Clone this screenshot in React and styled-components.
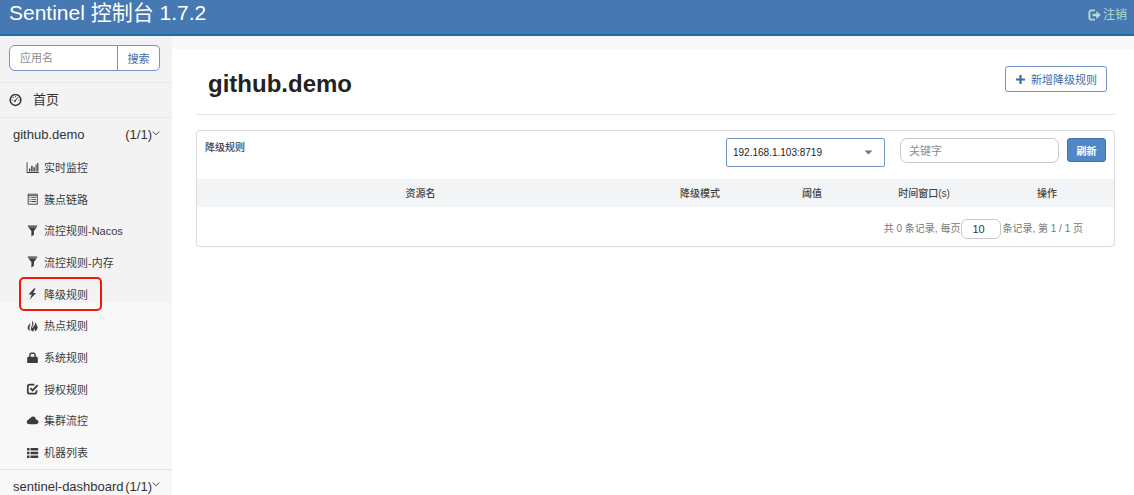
import React from "react";
import styled, { createGlobalStyle } from "styled-components";

const GlobalStyle = createGlobalStyle`
  *, *::before, *::after { box-sizing: border-box; }
  body {
    margin: 0;
    background: #fff;
    color: #333;
    font-family: "Liberation Sans", "Noto Sans CJK SC", sans-serif;
    font-size: 11px;
    line-height: 16px;
  }
  #root { overflow: hidden; }
  button, input, select { font-family: inherit; margin: 0; }
  svg { display: block; flex: none; }
`;

const Navbar = styled.header`
  display: flex;
  justify-content: space-between;
  align-items: flex-start;
  height: 36px;
  padding: 0 7px 0 9px;
  background: #4678b2;
  border-bottom: 2px solid #1a6cb4;
`;

const Brand = styled.a`
  color: #fff;
  font-size: 21px;
  line-height: 26px;
  text-decoration: none;
`;

const Logout = styled.a`
  display: flex;
  align-items: center;
  gap: 2px;
  color: #b4dccb;
  font-size: 12px;
  line-height: 30px;
  text-decoration: none;
`;

const Body = styled.div`
  display: flex;
  align-items: flex-start;
`;

const Sidebar = styled.nav`
  flex: none;
  width: 172px;
  background: linear-gradient(#f3f3f3 267px, #f8f8f8 267px);
`;

const Search = styled.form`
  display: flex;
  padding: 9px 12px 11px 9px;
  border-bottom: 1px solid #e7e7e7;
`;

const SearchInput = styled.input`
  flex: 1;
  min-width: 0;
  height: 26px;
  padding: 0 10px;
  border: 1px solid #7295c9;
  border-radius: 6px 0 0 6px;
  background: #fff;
  font-size: 11px;
  color: #333;
  &::placeholder { color: #8c8c8c; }
`;

const SearchButton = styled.button`
  width: 42px;
  height: 26px;
  padding: 0;
  border: 1px solid #7295c9;
  border-left: 0;
  border-radius: 0 5px 5px 0;
  background: #fff;
  color: #4169a8;
  font-size: 11px;
`;

const HomeLink = styled.a`
  display: flex;
  align-items: center;
  gap: 11px;
  height: 35px;
  padding-left: 9px;
  border-bottom: 1px solid #e7e7e7;
  color: #333;
  font-size: 13px;
  text-decoration: none;
`;

const AppLink = styled.a`
  display: flex;
  align-items: center;
  height: 34px;
  padding: 0 12px 0 13px;
  color: #333;
  font-size: 13px;
  text-decoration: none;
  border-top: ${(p) => (p.$divided ? "1px solid #e2e2e2" : "0")};
`;

const AppName = styled.span`
  flex: 1;
`;

const Menu = styled.ul`
  display: grid;
  grid-auto-rows: 1fr;
  height: 317px;
  margin: 0;
  padding: 0;
  list-style: none;
`;

const MenuItem = styled.li`
  position: relative;
  display: flex;
  padding-left: 26px;
`;

const MenuLink = styled.a`
  display: flex;
  align-items: center;
  gap: 5px;
  color: #3c3c3c;
  font-size: 11px;
  text-decoration: none;
`;

const Highlight = styled.span`
  position: absolute;
  top: -2px;
  left: 19px;
  width: 83px;
  height: 34px;
  border: 2px solid #f5150d;
  border-radius: 5px;
  pointer-events: none;
`;

const Main = styled.main`
  flex: 1;
  min-width: 0;
  border-top: 13px solid #f8f8f8;
  padding: 0 19px 0 24px;
`;

const PageHead = styled.div`
  display: flex;
  align-items: flex-start;
  justify-content: space-between;
  height: 66px;
  padding: 17px 8px 0 12px;
  border-bottom: 1px solid #e6e6e6;
`;

const Title = styled.h1`
  margin: 0;
  color: #222;
  font-size: 24px;
  line-height: 36px;
`;

const AddButton = styled.button`
  display: flex;
  align-items: center;
  gap: 5px;
  height: 26px;
  padding: 0 9px;
  border: 1px solid #7295c9;
  border-radius: 3px;
  background: #fff;
  color: #3f68a8;
  font-size: 11px;
`;

const Panel = styled.section`
  margin-top: 15px;
  border: 1px solid #dcdddf;
  border-radius: 4px;
  box-shadow: 0 0 1px #ddd;
`;

const PanelHead = styled.div`
  display: flex;
  align-items: flex-start;
  height: 48px;
  padding: 7px 8px 0;
`;

const PanelTitle = styled.h2`
  flex: 1;
  margin: 0;
  color: #444;
  font-size: 10px;
  font-weight: 500;
  line-height: 20px;
`;

const SelectBox = styled.div`
  display: grid;
  width: 159px;
  margin-right: 15px;
  > * { grid-area: 1 / 1; }
  svg { align-self: center; justify-self: end; margin-right: 12px; pointer-events: none; }
`;

const Select = styled.select`
  appearance: none;
  height: 29px;
  padding: 0 6px;
  border: 1px solid #7295c9;
  border-radius: 2px;
  background: #fff;
  color: #222;
  font-size: 10px;
`;

const KeywordInput = styled.input`
  width: 159px;
  height: 25px;
  margin-right: 8px;
  padding: 0 8px;
  border: 1px solid #c8c8c8;
  border-radius: 7px;
  background: #fff;
  color: #333;
  font-size: 11px;
  &::placeholder { color: #8c8c8c; }
`;

const RefreshButton = styled.button`
  width: 39px;
  height: 24px;
  padding: 0;
  border: 1px solid #3c74b6;
  border-radius: 3px;
  background: #5187c6;
  color: #fff;
  font-size: 10px;
  font-weight: 700;
`;

const Table = styled.table`
  width: 100%;
  table-layout: fixed;
  border-collapse: collapse;
`;

const HeadCell = styled.th`
  width: ${(p) => p.$width};
  height: 28px;
  padding: 2px 0 0;
  background: #f3f4f6;
  color: #444;
  font-size: 10px;
  font-weight: 500;
`;

const Pager = styled.div`
  display: flex;
  align-items: center;
  justify-content: flex-end;
  gap: 1px;
  height: 39px;
  padding: 4px 31px 0 0;
  color: #777;
  font-size: 10px;
`;

const PageSize = styled.input`
  width: 40px;
  height: 20px;
  padding: 0 10px;
  border: 1px solid #c8c8c8;
  border-radius: 6px;
  background: #fff;
  color: #333;
  font-size: 11px;
`;

const Icon = ({ children, size = 13 }) => (
  <svg width={size} height={size} viewBox="0 0 13 13" fill="currentColor" aria-hidden="true">
    {children}
  </svg>
);

const line = { fill: "none", stroke: "currentColor" };

const icons = {
  dashboard: (
    <>
      <circle cx="6.5" cy="6" r="5.4" {...line} strokeWidth="1.5" />
      <path d="M6.2 6.7L9 3.3" {...line} strokeWidth="1" />
      <circle cx="6" cy="7" r="1" />
      <path d="M2.6 5.5h1v1h-1zM3.8 3.1h1v1h-1zM6 2.2h1v1H6zM9.4 5.5h1v1h-1z" />
    </>
  ),
  chart: <path d="M.6 1.2h.9v9.900h11.500v.9H.6zM3 7.400h1.400v3H3zM5.200 4.800h1.400v5.600H5.200zM7.400 6.200h1.400v4.200H7.400zM9.600 3.400h1v7h-1zM11.200 2h1.200v8.400h-1.200z" />,
  listAlt: (
    <>
      <path d="M2.2 1.200h9.100v10H2.200zM2 2.700h9.500" {...line} strokeWidth=".9" />
      <path d="M3.500 4.300h1v1h-1zM5.300 4.300h4.800v.8H5.300zM3.500 6.200h1v1h-1zM5.300 6.200h4.800v.8H5.300zM3.500 8.100h1v1h-1zM5.300 8.100h4.800v.8H5.300z" />
    </>
  ),
  filter: <path d="M1.800.5h9.400v1.200H1.800zM2.300 2.300h8.400L7.900 6v3.700L5.400 11.500V6z" />,
  flash: <path d="M7.900.5L2.600 6.600h3.100L3.800 11.500l6.300-6.600H7.200L9.500.5z" />,
  fire: (
    <>
      <path d="M5.800.5c1.600 1.700 2.200 3.200 1.100 4.900-.7 1.200-.8 2.200.2 3.200-.2-1.600.5-2.600 1.500-3.700.8-.9.900-1.800.6-2.700 1.800 1.400 1.700 3 1.300 4.200.6-.2.8-.6.9-1.100.9 2.800-.3 5.200-2.900 6.200.7-1.300.6-2.300.1-3.200-.1 1.300-.8 2.200-1.700 3.300-1.500-.6-2.500-2.200-1.700-4.300.7-1.700 1.600-3 .6-6.800z" />
      <path d="M3.900 2.700c.7 1.500.5 2.300-.1 3.500-.7 1.500-.4 3.300 1.100 4.800C2.300 10.400 1 8.500 1.900 6.500c.7-1.500 1.800-2 2-3.800z" />
    </>
  ),
  lock: (
    <>
      <path d="M3.900 5.400V3.100Q3.900 1.300 5.400 1.300h2.200q1.500 0 1.500 1.800v2.300" {...line} strokeWidth="1.400" />
      <path d="M1.800 4.700h9.400l.6 1.600v4.800H1.200V6.300z" />
    </>
  ),
  check: (
    <>
      <path d="M8.400 1.700H3.800Q1.800 1.700 1.800 3.700v5q0 2 2 2h4.700q2 0 2-2V7.300" {...line} strokeWidth="1.700" />
      <path d="M4.300 5.100l2.300 2.300 5-5.300" {...line} strokeWidth="1.900" />
    </>
  ),
  cloud: <path d="M3.500 9.300C1.900 9.300.8 8.300.8 7c0-1.100.8-2 1.800-2.200.1-.9 1-1.400 1.700-1.200C4.800 2.200 6 1.400 7.300 1.600c1.500.2 2.500 1.300 2.600 2.800 1.500 0 2.600 1 2.600 2.400s-1.100 2.500-2.600 2.500z" />,
  list: <path d="M1 1h2.500v2.500H1zM4.500 1H12.200v2.500H4.500zM1 4.800h2.500v2.500H1zM4.500 4.800H12.200v2.500H4.500zM1 8.600h2.500v2.500H1zM4.500 8.600H12.200v2.500H4.500z" />,
  plus: <path d="M5.200 1.200h2.600v4h4v2.600h-4v4H5.200v-4h-4V5.200h4z" />,
  logout: (
    <>
      <path d="M7 1.400H3.600Q1.400 1.400 1.400 3.600v4.800q0 2.200 2.200 2.200H7" {...line} strokeWidth="1.900" />
      <path d="M4.600 4.700h3.700V2.100l4.500 3.900-4.500 3.900V7.300H4.600z" />
    </>
  ),
};

const Chevron = () => (
  <svg width="8" height="11" viewBox="0 0 8 11" aria-hidden="true">
    <path d="M.7 1.500L4 4.800l3.300-3.300" fill="none" stroke="#444" strokeWidth="1" />
  </svg>
);

const menu = [
  ["chart", "实时监控"],
  ["listAlt", "簇点链路"],
  ["filter", "流控规则-Nacos"],
  ["filter", "流控规则-内存"],
  ["flash", "降级规则"],
  ["fire", "热点规则"],
  ["lock", "系统规则"],
  ["check", "授权规则"],
  ["cloud", "集群流控"],
  ["list", "机器列表"],
];

const columns = [
  ["资源名", "auto"],
  ["降级模式", "112px"],
  ["阈值", "112px"],
  ["时间窗口(s)", "112px"],
  ["操作", "134px"],
];

function AppEntry({ name, divided }) {
  return (
    <AppLink href="#" $divided={divided}>
      <AppName>{name}</AppName>
      <span>(1/1)</span>
      <Chevron />
    </AppLink>
  );
}

export default function App() {
  return (
    <>
      <GlobalStyle />
      <Navbar>
        <Brand href="#">Sentinel 控制台 1.7.2</Brand>
        <Logout href="#">
          <Icon>{icons.logout}</Icon>
          注销
        </Logout>
      </Navbar>
      <Body>
        <Sidebar>
          <Search onSubmit={(e) => e.preventDefault()}>
            <SearchInput placeholder="应用名" aria-label="应用名" />
            <SearchButton>搜索</SearchButton>
          </Search>
          <HomeLink href="#">
            <Icon>{icons.dashboard}</Icon>
            首页
          </HomeLink>
          <AppEntry name="github.demo" />
          <Menu>
            {menu.map(([icon, label]) => (
              <MenuItem key={label}>
                <MenuLink href="#">
                  <Icon>{icons[icon]}</Icon>
                  {label}
                </MenuLink>
                {label === "降级规则" && <Highlight />}
              </MenuItem>
            ))}
          </Menu>
          <AppEntry name="sentinel-dashboard" divided />
        </Sidebar>
        <Main>
          <PageHead>
            <Title>github.demo</Title>
            <AddButton type="button">
              <Icon size={11}>{icons.plus}</Icon>
              新增降级规则
            </AddButton>
          </PageHead>
          <Panel>
            <PanelHead>
              <PanelTitle>降级规则</PanelTitle>
              <SelectBox>
                <Select aria-label="机器">
                  <option>192.168.1.103:8719</option>
                </Select>
                <svg width="9" height="5" viewBox="0 0 9 5" aria-hidden="true">
                  <path d="M.5.5h8l-4 4z" fill="#777" />
                </svg>
              </SelectBox>
              <KeywordInput placeholder="关键字" aria-label="关键字" />
              <RefreshButton type="button">刷新</RefreshButton>
            </PanelHead>
            <Table>
              <thead>
                <tr>
                  {columns.map(([label, width]) => (
                    <HeadCell key={label} scope="col" $width={width}>
                      {label}
                    </HeadCell>
                  ))}
                </tr>
              </thead>
            </Table>
            <Pager>
              <label htmlFor="page-size">共 0 条记录, 每页</label>
              <PageSize id="page-size" defaultValue="10" />
              <span>条记录, 第 1 / 1 页</span>
            </Pager>
          </Panel>
        </Main>
      </Body>
    </>
  );
}
